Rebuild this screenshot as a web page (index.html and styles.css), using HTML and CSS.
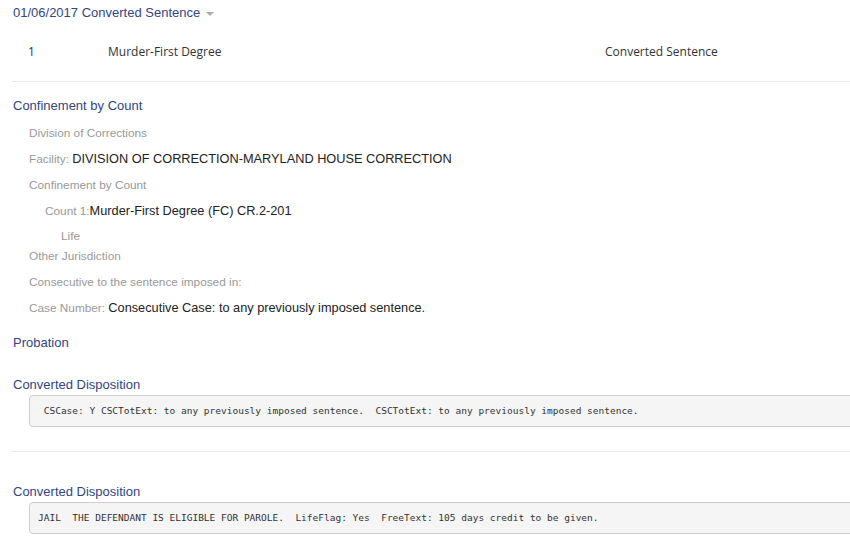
FILE: index.html
```html
<!DOCTYPE html>
<html lang="en">
<head>
  <meta charset="UTF-8">
  <meta name="viewport" content="width=device-width, initial-scale=1.0">
  <title>Converted Sentence</title>
  <link rel="stylesheet" href="styles.css">
</head>
<body>

  <div class="page">
    <div class="title">01/06/2017 Converted Sentence <span class="caret"></span></div>

    <div class="count-row">
      <span>1</span>
      <span>Murder-First Degree</span>
      <span>Converted Sentence</span>
    </div>

    <div class="heading heading-first">Confinement by Count</div>
    <div class="item">
      <div class="line"><span class="label">Division of Corrections</span></div>
      <div class="line"><span class="label">Facility: </span><span class="value">DIVISION OF CORRECTION-MARYLAND HOUSE CORRECTION</span></div>
      <div class="line"><span class="label">Confinement by Count</span></div>
      <div class="line indent"><span class="label">Count 1:</span><span class="value">Murder-First Degree (FC) CR.2-201</span></div>
      <div class="line life"><span class="label">Life</span></div>
      <div class="line"><span class="label">Other Jurisdiction</span></div>
      <div class="line"><span class="label">Consecutive to the sentence imposed in:</span></div>
      <div class="line"><span class="label">Case Number: </span><span class="value">Consecutive Case: to any previously imposed sentence.</span></div>
    </div>

    <div class="heading heading-probation">Probation</div>

    <div class="heading heading-disp">Converted Disposition</div>
    <pre class="disp"> CSCase: Y CSCTotExt: to any previously imposed sentence.  CSCTotExt: to any previously imposed sentence.</pre>

    <hr class="divider">

    <div class="heading heading-disp heading-disp2">Converted Disposition</div>
    <pre class="disp">JAIL  THE DEFENDANT IS ELIGIBLE FOR PAROLE.  LifeFlag: Yes  FreeText: 105 days credit to be given.</pre>
  </div>

</body>
</html>
```

FILE: styles.css
```css
html, body {
  margin: 0;
  overflow: hidden;
}

body {
  background-color: #fff;
  font-family: "Liberation Sans", Arial, sans-serif;
  color: #222;
}

.page {
  width: 900px;
  padding-left: 13px;
}

.title {
  font-size: 13px;
  line-height: 26px;
  color: #34457f;
}

.caret {
  display: inline-block;
  width: 0;
  height: 0;
  margin-left: 2px;
  vertical-align: middle;
  border-left: 4px solid transparent;
  border-right: 4px solid transparent;
  border-top: 4px solid #aaa;
}

.count-row {
  display: grid;
  grid-template-columns: 80px 497px auto;
  margin-left: -1px;
  padding: 18px 0 21px 16px;
  line-height: 16px;
  font-family: "Open Sans", "DejaVu Sans", sans-serif;
  font-size: 12px;
  color: #333;
  border-bottom: 1px solid #e8e8e8;
}

.heading {
  font-size: 13px;
  line-height: 26px;
  color: #34457f;
}

.heading-first {
  margin-top: 11px;
}

.item {
  padding-left: 16px;
}

.line {
  height: 18px;
  line-height: 18px;
  padding: 4px 0;
}

.indent {
  padding-left: 16px;
}

.life {
  height: 14px;
  line-height: 14px;
  padding: 5px 0 0 32px;
}

.label {
  font-size: 11.8px;
  color: #999;
}

.value {
  font-size: 12.75px;
  color: #222;
}

.heading-probation {
  margin-top: 10px;
}

.heading-disp {
  margin-top: 19px;
  line-height: 20px;
}

.heading-disp2 {
  margin-top: 30px;
}

.disp {
  margin: 0 0 0 16px;
  padding: 9px 8px 10px;
  line-height: 11px;
  font-family: "DejaVu Sans Mono", "Liberation Mono", monospace;
  font-size: 9.5px;
  color: #333;
  background-color: #f5f5f5;
  border: 1px solid #ccc;
  border-radius: 4px;
}

.divider {
  margin: 24px 0 0 -1px;
  border: none;
  border-top: 1px solid #e8e8e8;
}
```
